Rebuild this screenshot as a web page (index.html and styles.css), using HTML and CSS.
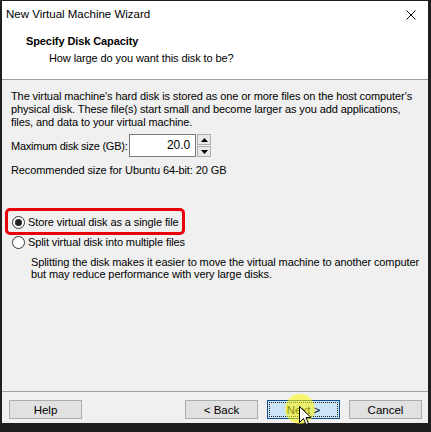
FILE: index.html
```html
<!DOCTYPE html>
<html>
<head>
<meta charset="utf-8">
<link rel="stylesheet" href="styles.css">
</head>
<body>
<div class="window">
  <div class="top">
    <div class="titlebar">
      <span class="title">New Virtual Machine Wizard</span>
      <svg class="close" width="10" height="10" viewBox="0 0 10 10"><path d="M0.5 0.5 L9.5 9.5 M9.5 0.5 L0.5 9.5" stroke="#000" stroke-width="1"/></svg>
    </div>
    <div class="heading">Specify Disk Capacity</div>
    <div class="subheading">How large do you want this disk to be?</div>
  </div>
  <div class="content">
    <p class="para">The virtual machine's hard disk is stored as one or more files on the host computer's<br>physical disk. These file(s) start small and become larger as you add applications,<br>files, and data to your virtual machine.</p>
    <div class="sizerow">
      <span class="label">Maximum disk size (GB):</span>
      <div class="input">20.0</div>
      <div class="spin">
        <div class="spinbtn"><svg width="7" height="4" viewBox="0 0 7 4"><path d="M3.5 0 L7 4 L0 4 Z" fill="#000"/></svg></div>
        <div class="spinbtn"><svg width="7" height="4" viewBox="0 0 7 4"><path d="M0 0 L7 0 L3.5 4 Z" fill="#000"/></svg></div>
      </div>
    </div>
    <p class="rec">Recommended size for Ubuntu 64-bit: 20 GB</p>
    <div class="radios">
      <div class="radio checked"><span class="circle"><span class="dot"></span></span>Store virtual disk as a single file</div>
      <div class="radio"><span class="circle"></span>Split virtual disk into multiple files</div>
      <p class="desc">Splitting the disk makes it easier to move the virtual machine to another computer<br>but may reduce performance with very large disks.</p>
      <div class="highlight"></div>
    </div>
  </div>
  <div class="footer">
    <button class="btn">Help</button>
    <div class="spacer"></div>
    <button class="btn">&lt; Back</button>
    <button class="btn primary"><span class="focus">Next &gt;</span></button>
    <button class="btn">Cancel</button>
    <div class="clickmark"></div>
    <svg class="cursor" width="13" height="20" viewBox="0 0 13 20"><path d="M0.5 0.5 L0.5 16.5 L4.5 12.5 L7 18.5 L9.5 17.5 L7 11.5 L12 11.5 Z" fill="#fff" stroke="#000" stroke-width="1" stroke-linejoin="miter"/></svg>
  </div>
</div>
</body>
</html>
```
FILE: styles.css
```css
html, body {
  margin: 0;
  padding: 0;
}
body {
  background: #1f1f1f;
  width: 431px;
  height: 432px;
  overflow: hidden;
  font-family: "Liberation Sans", Arial, sans-serif;
  font-size: 11px;
  letter-spacing: -0.1px;
  color: #000;
}
.window {
  margin: 1px 0 0 2px;
  width: 426px;
  height: 422px;
  background: #f0f0f0;
  display: flex;
  flex-direction: column;
}
.top {
  background: #fff;
  height: 78px;
  border-bottom: 1px solid #a0a0a0;
  flex: none;
}
.titlebar {
  height: 26px;
  display: flex;
  align-items: center;
  justify-content: space-between;
  padding: 0 12px 0 4px;
}
.title {
  font-size: 11.5px;
  letter-spacing: 0;
}
.close {
  display: block;
  margin-top: 1px;
}
.heading {
  font-weight: bold;
  padding-left: 24px;
  margin-top: 7px;
  line-height: 15px;
}
.subheading {
  padding-left: 47px;
  margin-top: 2px;
  line-height: 15px;
}
.content {
  flex: 1;
  padding: 10px 0 0 9px;
  white-space: nowrap;
}
.para {
  margin: 0;
  line-height: 13px;
}
.sizerow {
  display: flex;
  align-items: center;
  margin-top: 5px;
  height: 23px;
}
.label {
  width: 118px;
  flex: none;
  margin-top: 1px;
  letter-spacing: -0.25px;
}
.input {
  width: 60px;
  height: 21px;
  border: 1px solid #7a7a7a;
  background: #fff;
  text-align: right;
  line-height: 21px;
  padding-right: 5px;
  font-size: 12px;
}
.spin {
  display: flex;
  flex-direction: column;
  gap: 1px;
  margin-left: 1px;
  height: 23px;
}
.spinbtn {
  width: 12px;
  height: 9px;
  border: 1px solid #adadad;
  background: #e9e9e9;
  display: flex;
  align-items: center;
  justify-content: center;
}
.spinbtn svg {
  display: block;
}
.rec {
  margin: 7px 0 0 0;
  line-height: 13px;
}
.radios {
  position: relative;
  margin-top: 35px;
}
.radio {
  display: flex;
  align-items: center;
  height: 20px;
  margin-left: 1px;
}
.circle {
  width: 11px;
  height: 11px;
  border: 1px solid #333;
  border-radius: 50%;
  background: #fff;
  margin-right: 3px;
  display: flex;
  align-items: center;
  justify-content: center;
  flex: none;
}
.dot {
  width: 7px;
  height: 7px;
  border-radius: 50%;
  background: #222;
}
.desc {
  margin: 4px 0 0 20px;
  line-height: 12px;
}
.highlight {
  position: absolute;
  left: -6px;
  top: -4px;
  width: 174px;
  height: 21px;
  border: 3px solid #e8000b;
  border-radius: 5px;
}
.footer {
  position: relative;
  flex: none;
  border-top: 1px solid #a0a0a0;
  display: flex;
  align-items: flex-start;
  padding: 8px 6px 0 7px;
  box-sizing: border-box;
  height: 32px;
  gap: 9px;
}
.spacer {
  flex: 1;
}
.btn {
  width: 73px;
  height: 19px;
  border: 1px solid #adadad;
  background: #e1e1e1;
  font-family: "Liberation Sans", Arial, sans-serif;
  font-size: 11.5px;
  color: #000;
  padding: 0;
  margin: 0;
  display: flex;
  align-items: center;
  justify-content: center;
}
.btn.primary {
  border: 1px solid #0f4f8f;
  background: #cce4f7;
  padding: 1px;
}
.focus {
  width: 100%;
  height: 100%;
  border: 1px dotted #222;
  box-sizing: border-box;
  display: flex;
  align-items: center;
  justify-content: center;
}
.clickmark {
  position: absolute;
  left: 283px;
  top: 2px;
  width: 30px;
  height: 30px;
  border-radius: 50%;
  background: rgba(255, 245, 0, 0.55);
}
.cursor {
  position: absolute;
  left: 297px;
  top: 14px;
}
```
